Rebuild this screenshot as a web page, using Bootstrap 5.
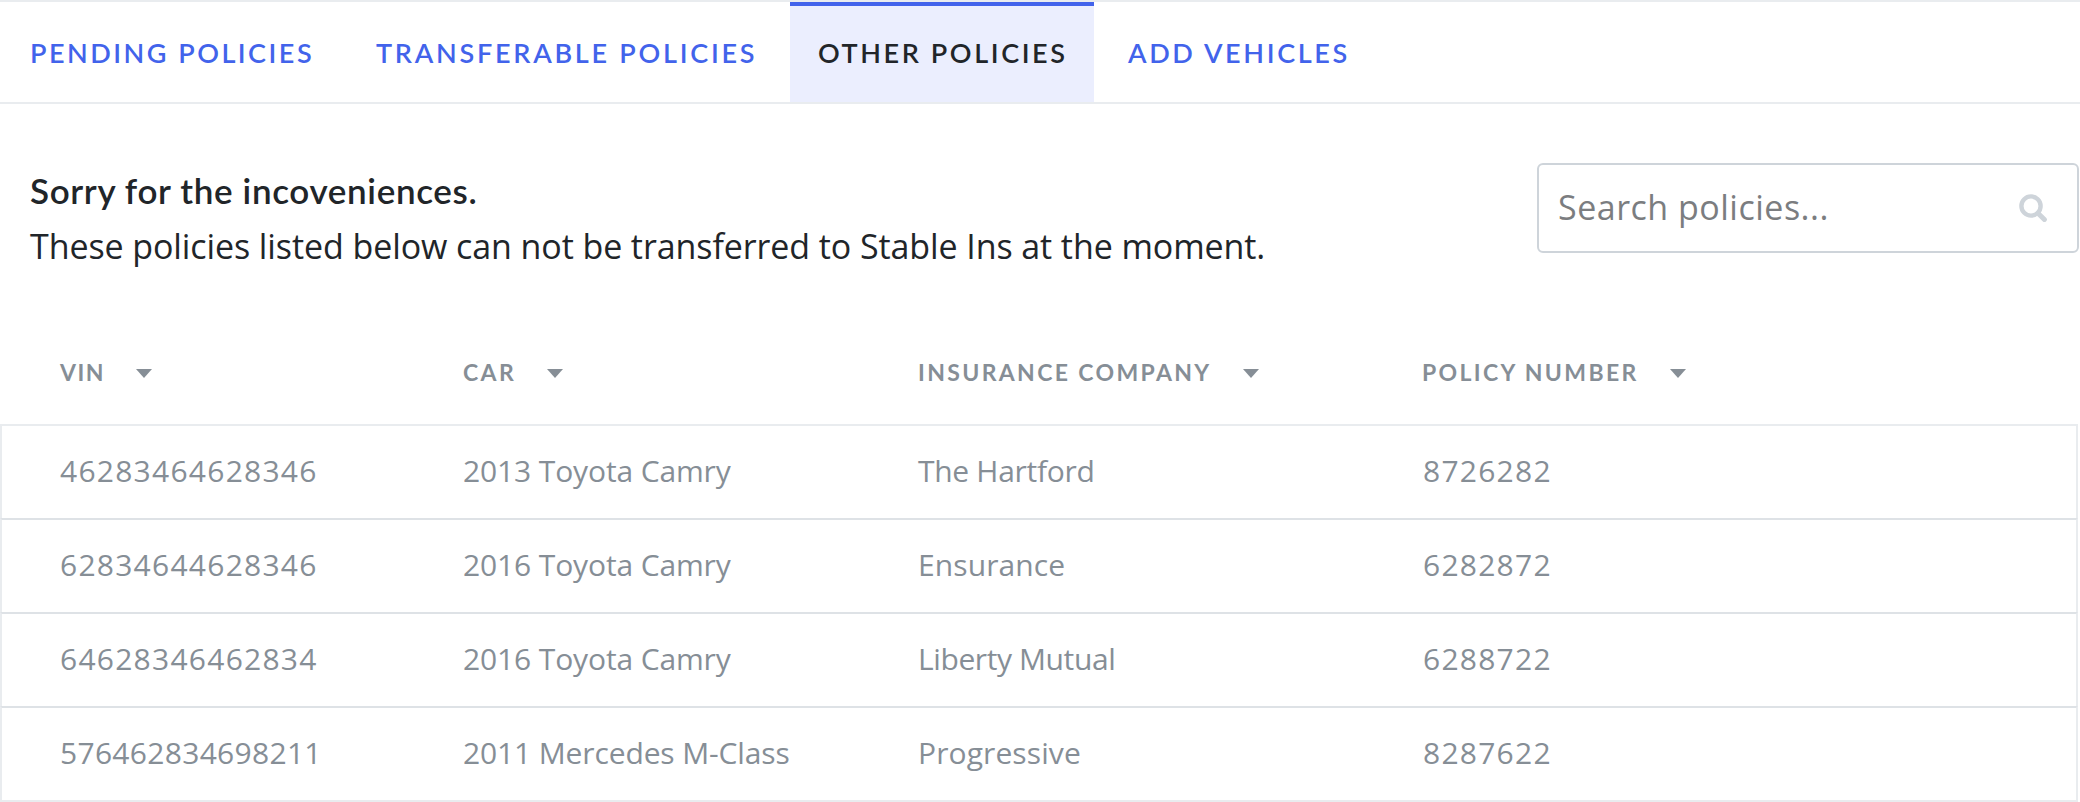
<!DOCTYPE html>
<html lang="en">
<head>
<meta charset="utf-8">
<meta name="viewport" content="width=device-width, initial-scale=1">
<title>Policies</title>
<link rel="stylesheet" href="https://cdn.jsdelivr.net/npm/bootstrap@5.3.0/dist/css/bootstrap.min.css">
<style>
  body { font-family: "Open Sans", sans-serif; font-size: 30px; color: #212529; background: #fff; overflow: hidden; }
  .tab-bar { height: 104px; border-top: 2px solid #e9ecef; border-bottom: 2px solid #e9ecef; }
  .tab-bar .nav-link { height: 100px; padding: 0; border-top: 4px solid transparent; border-radius: 0; color: #4263eb; font: 600 27px/94px Lato, sans-serif; letter-spacing: 2.5px; white-space: nowrap; }
  .tab-bar .nav-link.active { color: #212529; background: #ebeefe; border-top-color: #4263eb; }
  .tab-pending { width: 345px; padding-left: 30px !important; }
  .tab-transferable { width: 445px; padding-left: 31px !important; letter-spacing: 2.75px !important; }
  .tab-other { width: 304px; padding-left: 28px !important; letter-spacing: 2.6px !important; }
  .tab-add { padding-left: 34px !important; letter-spacing: 2.65px !important; }
  .intro { height: 320px; padding: 59px 1px 0 30px; }
  .intro-copy { font-size: 34px; line-height: 56px; white-space: nowrap; margin-top: -1px; }
  .intro-title { font: 600 35px/56px Lato, sans-serif; letter-spacing: .65px; }
  .intro-text { font-weight: 400; letter-spacing: -.09px; }
  .search-box { width: 542px; height: 90px; border: 2px solid #ced4da; border-radius: 6px; padding: 0 29px 0 19px; }
  .search-box input { font-size: 34px; line-height: 1; letter-spacing: .5px; color: #7b7d80; margin-top: -3px; }
  .search-box input::placeholder { color: #7b7d80; opacity: 1; }
  .policies { width: 2078px; table-layout: fixed; margin: -86px 0 0; color: #868e96; border-collapse: separate; border-spacing: 0; }
  .policies th { height: 86px; padding: 0 0 19px; font: 700 23px/30px Lato, sans-serif; letter-spacing: 2.35px; border: 0; color: #868e96; white-space: nowrap; vertical-align: middle; }
  .policies td { height: 94px; padding: 0; border: 0; border-top: 2px solid #dee2e6; line-height: 90px; padding-bottom: 2px; color: #868e96; white-space: nowrap; letter-spacing: -.3px; }
  .policies td:nth-child(2) { letter-spacing: -.13px; }
  .policies tr > :nth-child(2) { text-indent: -1px; }
  .policies td:nth-child(4) { text-indent: 1px; }
  .policies td.digits { letter-spacing: 1.25px; }
  .policies td.digits-long { letter-spacing: .3px; }
  .policies td.loose { letter-spacing: .1px; }
  .policies td.tight { letter-spacing: -.4px; }
  .policies tbody tr:first-child td { border-top-color: #e9ecef; }
  .policies tbody tr:last-child td { border-bottom: 2px solid #e9ecef; height: 96px; }
  .policies td:first-child { border-left: 2px solid #e9ecef; }
  .policies td:last-child { border-right: 2px solid #e9ecef; }
  .policies th:first-child { padding-left: 60px; letter-spacing: 1.5px; }
  .policies td:first-child { padding-left: 58px; }
  .caret { width: 16px; height: 9px; margin-left: 31px; fill: #868e96; vertical-align: 3px; }
</style>
</head>
<body>
<nav class="nav tab-bar flex-nowrap">
  <a class="nav-link tab-pending" href="#">PENDING POLICIES</a>
  <a class="nav-link tab-transferable" href="#">TRANSFERABLE POLICIES</a>
  <a class="nav-link tab-other active" href="#">OTHER POLICIES</a>
  <a class="nav-link tab-add" href="#">ADD VEHICLES</a>
</nav>
<section class="intro d-flex justify-content-between align-items-start">
  <div class="intro-copy">
    <div class="intro-title">Sorry for the incoveniences.</div>
    <div class="intro-text">These policies listed below can not be transferred to Stable Ins at the moment.</div>
  </div>
  <div class="search-box d-flex align-items-center">
    <input class="form-control border-0 p-0 shadow-none bg-transparent flex-grow-1" type="text" placeholder="Search policies..." aria-label="Search policies">
    <svg class="flex-shrink-0" width="29" height="28" viewBox="0 0 29 28" fill="none" stroke="#ced4da"><circle cx="12" cy="12" r="9.6" stroke-width="4.4"/><path d="M19 19.3l6.4 6.2" stroke-width="5" stroke-linecap="round"/></svg>
  </div>
</section>
<table class="policies">
  <colgroup><col style="width:464px"><col style="width:454px"><col style="width:504px"><col></colgroup>
  <thead><tr>
    <th>VIN<svg class="caret" viewBox="0 0 16 9"><path d="M0 0h16L8 9z"/></svg></th>
    <th>CAR<svg class="caret" viewBox="0 0 16 9"><path d="M0 0h16L8 9z"/></svg></th>
    <th>INSURANCE COMPANY<svg class="caret" viewBox="0 0 16 9"><path d="M0 0h16L8 9z"/></svg></th>
    <th>POLICY NUMBER<svg class="caret" viewBox="0 0 16 9"><path d="M0 0h16L8 9z"/></svg></th>
  </tr></thead>
  <tbody>
    <tr><td class="digits">46283464628346</td><td>2013 Toyota Camry</td><td>The Hartford</td><td class="digits">8726282</td></tr>
    <tr><td class="digits">62834644628346</td><td>2016 Toyota Camry</td><td class="loose">Ensurance</td><td class="digits">6282872</td></tr>
    <tr><td class="digits">64628346462834</td><td>2016 Toyota Camry</td><td class="tight">Liberty Mutual</td><td class="digits">6288722</td></tr>
    <tr><td class="digits-long">576462834698211</td><td>2011 Mercedes M-Class</td><td class="loose">Progressive</td><td class="digits">8287622</td></tr>
  </tbody>
</table>
<script src="https://cdn.jsdelivr.net/npm/bootstrap@5.3.0/dist/js/bootstrap.bundle.min.js"></script>
</body>
</html>
